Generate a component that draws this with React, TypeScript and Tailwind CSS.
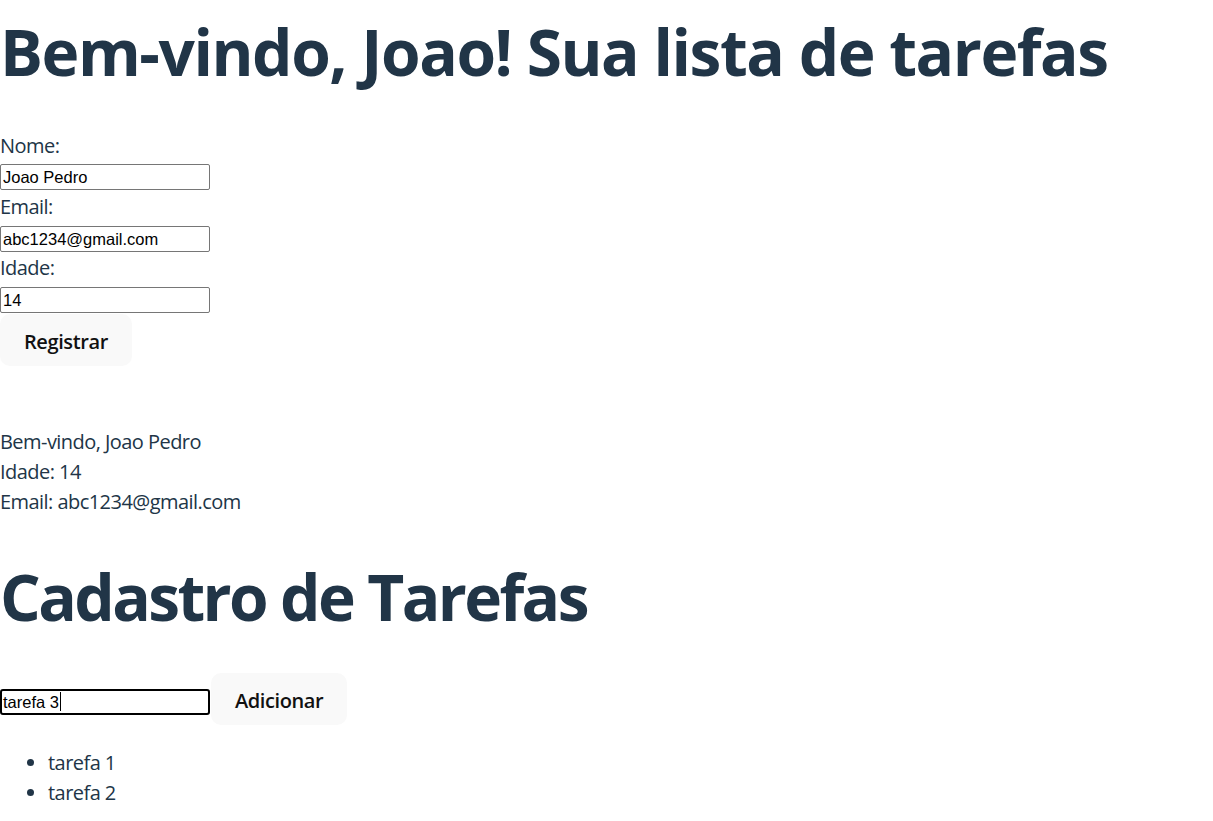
import React from "react";

const sans = "font-['Open_Sans','Noto_Sans',sans-serif]";
const field =
  "block w-[210px] h-[26px] border border-[#767676] rounded-[2px] px-[2px] text-[16.5px] leading-[22px] tracking-normal text-black font-['Liberation_Sans',Arial,sans-serif] bg-white";
const btn =
  "h-[52px] px-6 pt-[3px] rounded-[10px] bg-[#f9f9f9] text-[20px] font-semibold text-[#111] tracking-[-0.4px]";

export default function App() {
  return (
    <div className={`${sans} text-[#213547] text-[20px] leading-[30px] tracking-[-0.55px] bg-white min-h-[821px]`}>
      <h1 className="mt-[17px] text-[64px] leading-[70px] font-bold tracking-[-1.45px] whitespace-nowrap">
        Bem-vindo, Joao! Sua lista de tarefas
      </h1>

      {/* Registration form */}
      <div className="mt-[44px] flex flex-col items-start">
        <span>Nome:</span>
        <input className={`${field} mt-[3px]`} defaultValue="Joao Pedro" />
        <span className="mt-[2px]">Email:</span>
        <input className={`${field} mt-[4px]`} defaultValue="abc1234@gmail.com" />
        <span className="mt-[1px]">Idade:</span>
        <input className={`${field} mt-[4px]`} defaultValue="14" />
        <button className={`${btn} mt-[1px]`}>Registrar</button>
      </div>

      <div className="mt-[61px]">
        <p>Bem-vindo, Joao Pedro</p>
        <p>Idade: 14</p>
        <p>Email: abc1234@gmail.com</p>
      </div>

      <h1 className="mt-[45px] text-[64px] leading-[70px] font-bold tracking-[-2.6px] whitespace-nowrap">
        Cadastro de Tarefas
      </h1>

      <div className="mt-[41px] flex items-center">
        <div className="w-[210px] h-[26px] border-2 border-black rounded-[3px] px-[1px] flex items-center text-[16.5px] tracking-normal text-black font-['Liberation_Sans',Arial,sans-serif] mt-[5px]">
          tarefa 3
          <span className="inline-block w-px h-[19px] bg-black ml-px" />
        </div>
        <button className={`${btn} ml-px`}>Adicionar</button>
      </div>

      <ul className="mt-[23px] pl-[48px] list-disc">
        <li>tarefa 1</li>
        <li>tarefa 2</li>
      </ul>
    </div>
  );
}
